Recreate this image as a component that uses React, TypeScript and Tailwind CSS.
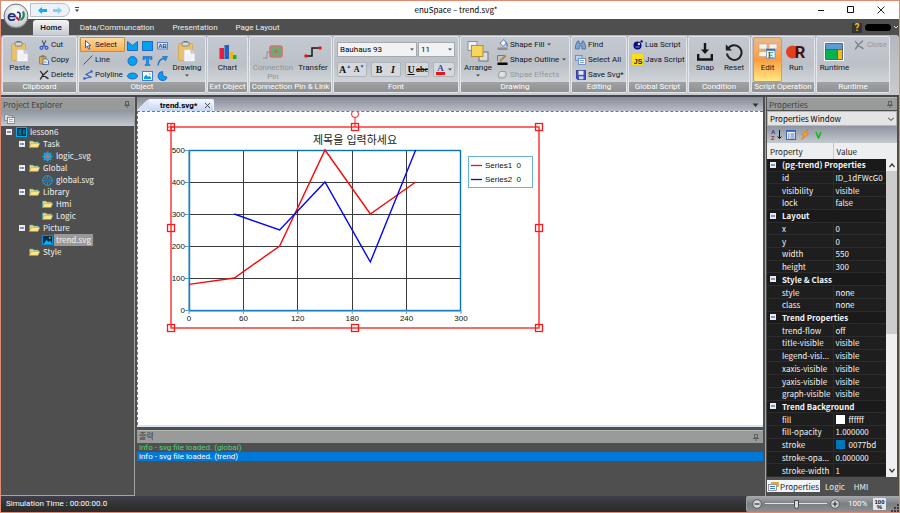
import React from "react";

type SvgProps = { w?: number; h?: number; box: string; children: React.ReactNode };

function Art({ w = 10, h = 10, box, children }: SvgProps) {
  return (
    <svg width={w} height={h} viewBox={box} fill="none" aria-hidden="true" className="shrink-0">
      {children}
    </svg>
  );
}

function Caret() {
  return (
    <Art w={4} h={3} box="0 0 4 3">
      <path d="M0 0.500h4L2 2.500z" fill="#444" />
    </Art>
  );
}

/* ---------- icons ---------- */

function PasteIcon() {
  return (
    <Art w={18} h={21} box="0 0 18 21">
      <rect x="0.500" y="2.500" width="14" height="17" rx="1" fill="#e8c16c" stroke="#d0aa62" />
      <rect x="4" y="1" width="7" height="4" rx="1" fill="#d5d8dc" stroke="#6f747b" strokeWidth="0.800" />
      <path d="M6 1.500a1.500 1.500 0 0 1 3 0" stroke="#555" />
      <path d="M6 8.500h7l4 3.500v8.500H6z" fill="#f6f8fb" stroke="#c1c7cf" strokeWidth="0.800" />
      <path d="M13 8.500v3.500h4" fill="#d8dee6" stroke="#a9b0ba" strokeWidth="0.800" />
      <path d="M8 14h7M8 16h7M8 18h5" stroke="#dfe4ea" strokeWidth="0.700" />
    </Art>
  );
}

function CutIcon() {
  return (
    <Art box="0 0 10 10">
      <path d="M3 0.500L6.500 7M7 0.500L3.500 7" stroke="#4a5a78" strokeWidth="1.200" />
      <circle cx="2.500" cy="7.800" r="1.500" stroke="#2b57c4" strokeWidth="1.200" />
      <circle cx="7.500" cy="7.800" r="1.500" stroke="#2b57c4" strokeWidth="1.200" />
    </Art>
  );
}

function CopyIcon() {
  return (
    <Art box="0 0 10 10">
      <rect x="0.500" y="1.500" width="6.500" height="7.500" rx="0.500" fill="#dcae52" stroke="#9a7433" strokeWidth="0.800" />
      <rect x="2" y="0.300" width="3.500" height="2" fill="#777" />
      <path d="M4 4h3.500L9.500 6v3.600H4z" fill="#fff" stroke="#2d55a8" strokeWidth="0.800" />
      <path d="M5 6.300h2.500M5 7.800h3.500" stroke="#5e86cf" strokeWidth="0.700" />
    </Art>
  );
}

function CrossIcon({ tone = "#2b2b2b" }: { tone?: string }) {
  return (
    <Art box="0 0 10 10">
      <path d="M1.500 1.500C3 4 6 7 9 8.500M8.500 1C6 3 3 6 1.500 9" stroke={tone} strokeWidth="1.400" strokeLinecap="round" />
    </Art>
  );
}

function PointerIcon() {
  return (
    <Art box="0 0 10 10">
      <path d="M2.500 0.500v7.200l1.800-1.600 1.400 3.200 1.300-.6-1.400-3.100h2.300z" fill="#fff" stroke="#2552c0" strokeWidth="0.900" />
    </Art>
  );
}

function LineIcon() {
  return (
    <Art box="0 0 10 10">
      <path d="M0.500 9.500l9-9" stroke="#2353c6" />
    </Art>
  );
}

function PolylineIcon() {
  return (
    <Art box="0 0 10 10">
      <path d="M1 8.500l7-1.500L3 4.500 8.500 1.500" stroke="#2f62cf" strokeWidth="1.200" />
      <circle cx="8.500" cy="1.500" r="1.300" fill="#2f62cf" />
      <circle cx="1.400" cy="8.500" r="1.300" fill="#2f62cf" />
    </Art>
  );
}

const blue = "#00a2f2";
const edge = "#2468c8";

const shapes: { name: string; art: React.ReactNode }[] = [
  { name: "Polygon", art: <path d="M0.500 0.500L5.500 4.500l5-4v9h-10z" fill={blue} stroke={edge} /> },
  { name: "Rectangle", art: <rect x="0.500" y="0.500" width="10" height="9" fill={blue} stroke={edge} /> },
  {
    name: "Text box",
    art: (
      <>
        <rect x="0.500" y="1.500" width="10" height="6.500" fill="#dbe7fa" stroke="#4f78c9" strokeWidth="0.900" />
        <text x="5.500" y="7" textAnchor="middle" fontSize="6" fontWeight="700" fill="#1d3f95" fontFamily="Liberation Sans, sans-serif">AB</text>
      </>
    ),
  },
  { name: "Circle", art: <circle cx="5.500" cy="5" r="4.500" fill={blue} stroke={edge} /> },
  { name: "Text", art: <path d="M1 0.600h9v3H8.500L8 2.200H6.600v6.100l1.400.4v.9H3v-.9l1.400-.4V2.200H3L2.500 3.600H1z" fill={blue} stroke={edge} strokeWidth="0.700" /> },
  {
    name: "Arc",
    art: (
      <>
        <path d="M1 9.500C1.500 5 4 2.800 7 2.500" stroke="#2468c8" strokeWidth="1.300" />
        <path d="M5.500 0.500h5l-2 4.500z" fill={blue} stroke={edge} strokeWidth="0.700" />
      </>
    ),
  },
  { name: "Ellipse", art: <ellipse cx="5.500" cy="5" rx="5" ry="3" fill={blue} stroke={edge} /> },
  {
    name: "Image",
    art: (
      <>
        <rect x="0.500" y="0.500" width="10" height="9" fill="#f4faff" stroke="#3c7fd6" />
        <path d="M2 8V6l2-2.200 2 2 1.300-1 1.700 1.700V8z" fill={blue} />
        <circle cx="7.800" cy="2.900" r="0.900" fill="#f0b32a" />
      </>
    ),
  },
  { name: "Pie", art: <path d="M5.500 0.500A4.500 4.500 0 1 0 10 6.200L6 5z" fill={blue} stroke={edge} /> },
];

function ChartIcon() {
  return (
    <Art w={18} h={14} box="0 0 18 14">
      <rect x="0.500" y="3" width="4.500" height="11" fill="#e81d3f" />
      <rect x="5.500" y="0" width="4.500" height="14" fill="#2163c4" />
      <rect x="10.500" y="7" width="3.500" height="7" fill="#f2b41b" />
      <rect x="14" y="10" width="3.500" height="4" fill="#14b52e" />
    </Art>
  );
}

function PinIcon() {
  return (
    <Art w={20} h={14} box="0 0 20 14">
      <rect x="7" y="1" width="12" height="11" rx="1.500" fill="#6cab72" stroke="#de6e73" strokeWidth="1.600" />
      <path d="M0 13h4V7h8" stroke="#8a8f94" />
      <circle cx="13" cy="6.500" r="1.400" fill="#e2565a" />
    </Art>
  );
}

function TransferIcon() {
  return (
    <Art w={18} h={12} box="0 0 18 12">
      <path d="M2 10h6V2h8" stroke="#161616" strokeWidth="1.500" />
      <circle cx="2" cy="10" r="1.800" fill="#f01414" />
      <circle cx="16" cy="2" r="1.800" fill="#f01414" />
    </Art>
  );
}

function ArrangeIcon() {
  return (
    <Art w={22} h={21} box="0 0 22 21">
      <rect x="1" y="0.500" width="9" height="9" fill="#eef0f3" stroke="#8b8f97" />
      <rect x="12" y="11" width="9" height="9" fill="#d9dde3" stroke="#6e737b" />
      <rect x="4.500" y="4.500" width="11.500" height="11" fill="#f7d65c" stroke="#b8902a" />
    </Art>
  );
}

function FillIcon() {
  return (
    <Art w={11} h={11} box="0 0 11 11">
      <path d="M3 4l4-3.500L9.500 4 6 7.500z" fill="#eef4fa" stroke="#516a93" strokeWidth="0.800" />
      <path d="M8.500 3.500c2 1 2 2.500 1.500 4" stroke="#3a86d8" strokeWidth="1.200" />
      <rect x="0.500" y="8.500" width="10" height="2.500" fill="#8f9091" />
    </Art>
  );
}

function OutlineIcon() {
  return (
    <Art w={11} h={11} box="0 0 11 11">
      <path d="M0.500 7V1.500h7" stroke="#777" />
      <path d="M3 7l6-5.500" stroke="#b6852f" strokeWidth="1.800" />
      <rect x="0.500" y="8.500" width="10" height="2.500" fill="#050505" />
    </Art>
  );
}

function EffectsIcon() {
  return (
    <Art w={11} h={11} box="0 0 11 11">
      <path d="M3 2.500h5.500l1 3.500-2 3H2L1 6z" fill="#cfd2d5" stroke="#9a9da1" />
      <ellipse cx="5" cy="5" rx="2.500" ry="2" fill="#e2e4e6" />
    </Art>
  );
}

function FindIcon() {
  return (
    <Art w={11} h={10} box="0 0 11 10">
      <path d="M2.500 1h1.500v2.500h3V1h1.500l2 4.500V9H6.800V6H4.200v3H0.500V5.500z" fill="#7fa3d2" stroke="#456a9f" strokeWidth="0.800" />
    </Art>
  );
}

function SelectAllIcon() {
  return (
    <Art w={11} h={10} box="0 0 11 10">
      <rect x="0.500" y="0.500" width="6.500" height="5" fill="#bcd2f2" stroke="#5f86c2" strokeWidth="0.800" />
      <rect x="3.500" y="3.500" width="7" height="6" fill="#eef4fc" stroke="#5f86c2" strokeWidth="0.800" />
      <path d="M5 5.500h4M5 7.500h4" stroke="#7fa3d2" />
    </Art>
  );
}

function SaveIcon() {
  return (
    <Art box="0 0 10 10">
      <path d="M0.500 0.500h9v9h-8l-1-1z" fill="#3e51c4" stroke="#25318d" strokeWidth="0.800" />
      <rect x="2.500" y="0.800" width="5" height="4" fill="#e6ebfa" />
      <rect x="3" y="6.300" width="4.500" height="3" fill="#c9d0ee" />
    </Art>
  );
}

function LuaIcon() {
  return (
    <Art box="0 0 10 10">
      <circle cx="4.500" cy="5.500" r="4" fill="#0a0a82" />
      <circle cx="8.600" cy="1.400" r="1.200" fill="#0a0a82" />
      <circle cx="5.900" cy="4" r="1.200" fill="#d8dcec" />
      <path d="M2.500 7h4" stroke="#b9bedd" strokeWidth="0.800" />
    </Art>
  );
}

function JsIcon() {
  return (
    <Art w={11} h={11} box="0 0 11 11">
      <rect width="11" height="11" fill="#f7df1e" />
      <text x="10.300" y="9.800" textAnchor="end" fontSize="7" fontWeight="700" fill="#1b1b1b" fontFamily="Liberation Sans, sans-serif">JS</text>
    </Art>
  );
}

function SnapIcon() {
  return (
    <Art w={16} h={18} box="0 0 16 18">
      <path d="M8 0v8" stroke="#161616" strokeWidth="2.400" />
      <path d="M4 6.500h8L8 11z" fill="#161616" />
      <path d="M1.200 11v5.500h13.600V11" stroke="#161616" strokeWidth="2.400" />
    </Art>
  );
}

function ResetIcon() {
  return (
    <Art w={18} h={18} box="0 0 18 18">
      <path d="M3.200 5.500A7.300 7.300 0 1 1 2 10.500" stroke="#222" strokeWidth="2" />
      <path d="M0.800 1.200v6.300H7z" fill="#222" />
    </Art>
  );
}

function EditIcon() {
  return (
    <Art w={20} h={17} box="0 0 20 17">
      <rect x="1" y="1" width="8" height="5" fill="#f5f2ec" stroke="#b9a98c" strokeWidth="0.600" />
      <rect x="11" y="1" width="8" height="5" fill="#f5f2ec" stroke="#b9a98c" strokeWidth="0.600" />
      <rect x="1" y="8.500" width="8" height="5" fill="#f5f2ec" stroke="#b9a98c" strokeWidth="0.600" />
      <rect x="8.500" y="6" width="8.500" height="9.500" fill="#fbfbfb" stroke="#5d83bd" strokeWidth="0.700" />
      <rect x="8.500" y="6" width="8.500" height="1.800" fill="#2e6dd0" />
      <text x="12.800" y="14.500" textAnchor="middle" fontSize="9" fontWeight="700" fill="#11815a" fontFamily="Liberation Serif, serif">E</text>
    </Art>
  );
}

function RunIcon() {
  return (
    <Art w={22} h={18} box="0 0 22 18">
      <circle cx="7.500" cy="9" r="6.500" fill="#e2401f" />
      <text x="15" y="15" textAnchor="middle" fontSize="17" fontWeight="700" fill="#451318" fontFamily="Roboto, sans-serif">R</text>
    </Art>
  );
}

function RuntimeIcon() {
  return (
    <Art w={20} h={19} box="0 0 20 19">
      <rect width="20" height="19" fill="#fafafa" />
      <rect x="1.500" y="1.500" width="17" height="6" fill="#5b9bd8" />
      <rect x="1.500" y="7.500" width="12" height="10" fill="#08b054" />
      <rect x="13.500" y="7.500" width="5" height="10" fill="#fdb913" />
      <path d="M1.500 1.500h17v16h-17zM1.500 7.500h17M13.500 7.500v10" stroke="#36506d" strokeWidth="0.800" />
    </Art>
  );
}

function ThumbTack({ tone = "#54585c" }: { tone?: string }) {
  return (
    <Art w={6} h={7} box="0 0 6 7">
      <path d="M1.500 0.500h3v3.500h-3zM0 4.500h6M3 4.500V7" stroke={tone} strokeWidth="0.900" />
    </Art>
  );
}

function FolderIcon() {
  return (
    <Art w={11} h={8} box="0 0 11 8">
      <path d="M0.500 7.500V1h3.500l1 1h4.500v2" fill="#f3d878" stroke="#1ea3c9" strokeWidth="0.700" />
      <path d="M2.300 3.300H11L9 7.500H0.500z" fill="#fbe38b" stroke="#b28a2c" strokeWidth="0.500" />
    </Art>
  );
}

function ProjectIcon() {
  return (
    <Art w={11} h={10} box="0 0 11 10">
      <rect x="0.500" y="0.500" width="10" height="9" fill="#063246" stroke="#00aeef" />
      <path d="M2.500 3h3M2.500 5h3M2.500 7h3M8 2.500v5" stroke="#00aeef" />
    </Art>
  );
}

function GearIcon() {
  return (
    <Art w={11} h={11} box="0 0 11 11">
      <path d="M5.500 0.500v10M0.500 5.500h10M2 2l7 7M9 2L2 9" stroke="#12a5ee" strokeWidth="2" />
      <circle cx="5.500" cy="5.500" r="3.600" fill="#12a5ee" />
      <circle cx="5.500" cy="5.500" r="1.900" fill="#f0642c" />
    </Art>
  );
}

function GlobeIcon() {
  return (
    <Art w={11} h={11} box="0 0 11 11">
      <circle cx="5.500" cy="5.500" r="4.800" stroke="#1aa3e8" />
      <path d="M5.500 0.500v10M0.500 5.500h10M2 2l7 7M9 2L2 9" stroke="#1aa3e8" strokeWidth="0.700" />
      <circle cx="5.500" cy="5.500" r="1.600" fill="#0d6fb0" />
    </Art>
  );
}

function PictureIcon() {
  return (
    <Art w={11} h={10} box="0 0 11 10">
      <rect x="0.500" y="0.500" width="10" height="9" fill="#04314a" stroke="#0d8fd0" />
      <path d="M1.500 9l3-4 2 2 1.500-1.500L10 9z" fill="#1aa9f2" />
      <circle cx="7.800" cy="2.800" r="0.900" fill="#ffa52c" />
    </Art>
  );
}

/* ---------- ribbon ---------- */

function Group({ title, className, children }: { title: string; className: string; children: React.ReactNode }) {
  return (
    <section
      aria-label={title}
      className={`flex h-[57px] min-w-0 flex-col overflow-hidden rounded-[2px] border border-[#e3e6ea] bg-linear-to-b from-[#c4c8d0] via-[#bcc1c8] to-[#dde1e3] ${className}`}
    >
      <div className="flex flex-1">{children}</div>
      <h2 className="h-[10px] bg-linear-to-b from-[#a0a2a3] to-[#8f9192] text-center leading-[10px] whitespace-nowrap text-white">
        {title}
      </h2>
    </section>
  );
}

function Big({ icon, label, caret, active, off, className = "" }: { icon: React.ReactNode; label: string; caret?: boolean; active?: boolean; off?: boolean; className?: string }) {
  return (
    <button
      type="button"
      disabled={off}
      className={`flex h-[45px] flex-col items-center border pt-[2px] ${active ? "rounded-[2px] border-[#c2a15c] bg-linear-to-b from-[#e9b98a] via-[#fb9c3c] to-[#ffe983]" : "border-transparent"} ${off ? "text-[#8e9296]" : "text-[#15151f]"} ${className}`}
    >
      <span className="flex h-[23px] items-center justify-center">{icon}</span>
      <span className="text-center leading-[9px]">{label}</span>
      {caret && <span className="mt-[2px]"><Caret /></span>}
    </button>
  );
}

function Small({ icon, label, caret, active, off }: { icon: React.ReactNode; label: string; caret?: boolean; active?: boolean; off?: boolean }) {
  return (
    <button
      type="button"
      disabled={off}
      className={`flex h-[15px] items-center gap-[2px] border px-px whitespace-nowrap ${active ? "rounded-[1px] border-[#b99148] bg-linear-to-b from-[#fbd9a0] to-[#fbb04e]" : "border-transparent"} ${off ? "text-[#93979b]" : "text-[#15151f]"}`}
    >
      <span className="flex w-[11px] justify-center">{icon}</span>
      <span>{label}</span>
      {caret && <span className="pl-px"><Caret /></span>}
    </button>
  );
}

function FontButton({ name, children }: { name: string; children: React.ReactNode }) {
  return (
    <button type="button" aria-label={name} className="flex h-[13px] flex-1 items-center justify-center font-['Liberation_Serif',serif] text-[10px] leading-[12px] text-[#111]">
      {children}
    </button>
  );
}

function Ribbon() {
  return (
    <div className="flex h-[60px] gap-px rounded-t-[3px] bg-[#84868c] bg-linear-to-b from-[#b4b7bd] to-[#c8ccd0] px-px pt-px text-[8px] leading-[12px]">
      <Group title="Clipboard" className="w-[75px]">
        <Big icon={<PasteIcon />} label="Paste" className="w-[33px]" />
        <div className="flex flex-col items-start">
          <Small icon={<CutIcon />} label="Cut" />
          <Small icon={<CopyIcon />} label="Copy" />
          <Small icon={<CrossIcon />} label="Delete" />
        </div>
      </Group>
      <Group title="Object" className="w-[128px]">
        <div className="flex w-[46px] flex-col pl-px">
          <Small icon={<PointerIcon />} label="Select" active />
          <Small icon={<LineIcon />} label="Line" />
          <Small icon={<PolylineIcon />} label="Polyline" />
        </div>
        <div className="grid w-[45px] grid-cols-3 content-start justify-items-center gap-y-[4px] pt-[3px]">
          {shapes.map((s) => (
            <button key={s.name} type="button" aria-label={s.name} className="h-[11px]">
              <Art w={11} h={10} box="0 0 11 10">{s.art}</Art>
            </button>
          ))}
        </div>
        <Big icon={<PasteIcon />} label="Drawing" caret className="w-[34px]" />
      </Group>
      <Group title="Ext Object" className="w-[41px]">
        <Big icon={<ChartIcon />} label="Chart" className="w-full" />
      </Group>
      <Group title="Connection Pin & Link" className="w-[83px]">
        <Big icon={<PinIcon />} label="Connection Pin" off className="w-[46px]" />
        <Big icon={<TransferIcon />} label="Transfer" className="w-[34px]" />
      </Group>
      <Group title="Font" className="w-[126px]">
        <div className="flex flex-1 flex-col gap-[5px] px-[3px] pt-[5px]">
          <div className="flex gap-px">
            <div className="relative flex-1">
              <select aria-label="Font name" className="h-[15px] w-full appearance-none border border-[#a6a9ae] bg-[#f1f2f3] pl-[2px] text-[8px] leading-[13px] text-black">
                <option>Bauhaus 93</option>
              </select>
              <span className="pointer-events-none absolute top-[6px] right-[3px]"><Caret /></span>
            </div>
            <div className="relative w-[37px]">
              <select aria-label="Font size" className="h-[15px] w-full appearance-none border border-[#a6a9ae] bg-[#f1f2f3] pl-[2px] text-[8px] leading-[13px] text-black">
                <option>11</option>
              </select>
              <span className="pointer-events-none absolute top-[6px] right-[3px]"><Caret /></span>
            </div>
          </div>
          <div className="flex gap-[4px]">
            <div className="flex w-[30px] rounded-[2px] border border-[#b0b5bb] bg-[#d5d9dd]">
              <FontButton name="Grow font"><b>A</b><sup className="text-[5px] text-[#2458bb]">▲</sup></FontButton>
              <FontButton name="Shrink font"><b className="text-[8px]">A</b><sup className="text-[5px] text-[#2458bb]">▼</sup></FontButton>
            </div>
            <div className="flex w-[30px] rounded-[2px] border border-[#b0b5bb] bg-[#d5d9dd]">
              <FontButton name="Bold"><b>B</b></FontButton>
              <FontButton name="Italic"><i className="font-bold">I</i></FontButton>
            </div>
            <div className="flex flex-1 rounded-[2px] border border-[#b0b5bb] bg-[#d5d9dd]">
              <FontButton name="Underline"><u className="font-bold">U</u></FontButton>
              <FontButton name="Strikethrough"><s className="text-[8px] font-bold">abc</s></FontButton>
            </div>
            <div className="flex w-[22px] rounded-[2px] border border-[#b0b5bb] bg-[#d5d9dd]">
              <FontButton name="Font colour">
                <span className="h-[11px] border-b-3 border-[#ee1414] px-px text-[9px] leading-[9px] font-bold text-[#2450a8]">A</span>
                <span className="pl-[3px]"><Caret /></span>
              </FontButton>
            </div>
          </div>
        </div>
      </Group>
      <Group title="Drawing" className="w-[110px]">
        <Big icon={<ArrangeIcon />} label="Arrange" caret className="w-[34px]" />
        <div className="flex flex-col items-start">
          <Small icon={<FillIcon />} label="Shape Fill" caret />
          <Small icon={<OutlineIcon />} label="Shape Outline" caret />
          <Small icon={<EffectsIcon />} label="Shpae Effects" off />
        </div>
      </Group>
      <Group title="Editing" className="w-[56px]">
        <div className="flex flex-col items-start pl-px">
          <Small icon={<FindIcon />} label="Find" />
          <Small icon={<SelectAllIcon />} label="Select All" />
          <Small icon={<SaveIcon />} label="Save Svg*" />
        </div>
      </Group>
      <Group title="Global Script" className="w-[59px]">
        <div className="flex flex-col items-start pl-px">
          <Small icon={<LuaIcon />} label="Lua Script" />
          <Small icon={<JsIcon />} label="Java Script" />
        </div>
      </Group>
      <Group title="Condition" className="w-[62px]">
        <Big icon={<SnapIcon />} label="Snap" className="w-[32px]" />
        <Big icon={<ResetIcon />} label="Reset" className="w-[26px]" />
      </Group>
      <Group title="Script Operation" className="w-[64px]">
        <Big icon={<EditIcon />} label="Edit" active className="ml-px w-[29px]" />
        <Big icon={<RunIcon />} label="Run" className="w-[28px]" />
      </Group>
      <Group title="Runtime" className="w-[74px]">
        <Big icon={<RuntimeIcon />} label="Runtime" className="w-[36px]" />
        <div>
          <Small icon={<CrossIcon tone="#7c8084" />} label="Close" off />
        </div>
      </Group>
    </div>
  );
}

/* ---------- title and tabs ---------- */

function Header() {
  return (
    <header className="relative">
      <div className="flex h-[18px] items-center bg-white">
        <div className="ml-[29px] flex h-[14px] w-[40px] items-center justify-center gap-[4px] rounded-r-full border border-[#b7c1cd] bg-[#edf2f8]">
          <button type="button" aria-label="Undo">
            <Art w={10} h={7} box="0 0 10 7"><path d="M0 3.500L4 0v2h5v3H4v2z" fill="#12aaf0" /></Art>
          </button>
          <button type="button" aria-label="Redo">
            <Art w={10} h={7} box="0 0 10 7"><path d="M10 3.500L6 0v2H1v3h5v2z" fill="#7fd0f3" /></Art>
          </button>
        </div>
        <button type="button" aria-label="Customize toolbar" className="ml-[5px]">
          <Art w={4} h={6} box="0 0 4 6"><path d="M0 0.500h4" stroke="#444" /><path d="M0 2.500h4L2 5z" fill="#444" /></Art>
        </button>
        <h1 className="flex-1 pl-[26px] text-center font-['Noto_Sans_CJK_KR',sans-serif] text-[8px] leading-[16px] text-black">enuSpace – trend.svg*</h1>
        <div className="flex w-[92px] items-center gap-[22px] pl-[10px]">
          <button type="button" aria-label="Minimize"><Art w={8} h={8} box="0 0 8 8"><path d="M1 4.500h6" stroke="#111" /></Art></button>
          <button type="button" aria-label="Maximize"><Art w={8} h={8} box="0 0 8 8"><path d="M0.500 0.500h6v6h-6z" stroke="#111" /></Art></button>
          <button type="button" aria-label="Close"><Art w={8} h={8} box="0 0 8 8"><path d="M0.500 0.500l7 7M7.500 0.500l-7 7" stroke="#111" strokeWidth="0.900" /></Art></button>
        </div>
      </div>
      <nav className="flex h-[16px] items-end bg-[#4f4f4f] pl-[32px] text-[8px] leading-[14px] text-[#eeeeee]">
        <button type="button" className="h-[15px] w-[36px] rounded-t-[3px] bg-linear-to-b from-[#f4f5f7] to-[#c6cad1] font-semibold text-[#1a1a2a]">Home</button>
        <button type="button" className="h-[15px] w-[96px]">Data/Communcation</button>
        <button type="button" className="h-[15px] w-[60px]">Presentation</button>
        <button type="button" className="h-[15px] w-[65px]">Page Layout</button>
        <div className="ml-auto flex h-[15px] items-center gap-[3px] pr-px">
          <button type="button" aria-label="Help" className="h-[10px] w-[10px] bg-[#333] text-[10px] leading-[10px] font-bold text-[#ffbe14]">?</button>
          <span className="h-[7px] w-[26px] rounded-full bg-black" />
          <Art w={4} h={3} box="0 0 4 3"><path d="M0 0l2 2 2-2" stroke="#ddd" /></Art>
        </div>
      </nav>
      <button type="button" aria-label="Application menu" className="absolute top-[2px] left-[2px]">
        <Art w={26} h={26} box="0 0 26 26">
          <defs>
            <radialGradient id="orb" cx="0.500" cy="0.300" r="0.800">
              <stop offset="0" stopColor="#ffffff" />
              <stop offset="0.700" stopColor="#cfd3d8" />
              <stop offset="1" stopColor="#92979d" />
            </radialGradient>
          </defs>
          <circle cx="13" cy="13" r="12" fill="url(#orb)" stroke="#6d7176" />
          <path d="M5.500 13.500h6.500c0-4-6.500-3.500-6.500.5 0 3.500 4 4 6.500 2" stroke="#1b2c6d" strokeWidth="1.700" />
          <path d="M14 9.500c3-1 4 2 2.500 6" stroke="#1b2c6d" strokeWidth="1.500" />
          <path d="M13 14l3.500 3.500" stroke="#c22032" strokeWidth="2" />
          <path d="M20 8.500c1.500 3 1 7-2.500 8.500" stroke="#1c8a4c" strokeWidth="2.200" />
        </Art>
      </button>
    </header>
  );
}

/* ---------- project explorer ---------- */

type Row = { level: number; label: string; icon: React.ReactNode; open?: boolean; picked?: boolean };

const rows: Row[] = [
  { level: 0, label: "lesson6", icon: <ProjectIcon />, open: true },
  { level: 1, label: "Task", icon: <FolderIcon />, open: true },
  { level: 2, label: "logic_svg", icon: <GearIcon /> },
  { level: 1, label: "Global", icon: <FolderIcon />, open: true },
  { level: 2, label: "global.svg", icon: <GlobeIcon /> },
  { level: 1, label: "Library", icon: <FolderIcon />, open: true },
  { level: 2, label: "Hmi", icon: <FolderIcon /> },
  { level: 2, label: "Logic", icon: <FolderIcon /> },
  { level: 1, label: "Picture", icon: <FolderIcon />, open: true },
  { level: 2, label: "trend.svg", icon: <PictureIcon />, picked: true },
  { level: 1, label: "Style", icon: <FolderIcon /> },
];

const indents = ["pl-[5px]", "pl-[18px]", "pl-[31px]"];

function Toggle() {
  return (
    <Art w={6} h={6} box="0 0 6 6">
      <rect width="6" height="6" fill="#e9ecf2" />
      <path d="M1 3h4" stroke="#2b3b6b" />
    </Art>
  );
}

function PanelTitle({ children }: { children: React.ReactNode }) {
  return (
    <div className="flex h-[13px] items-center justify-between border-t border-[#b4b6b5] bg-[#989b99] pr-[4px] pl-[2px] text-[#3e4144]">
      <h2>{children}</h2>
      <button type="button" aria-label="Pin panel"><ThumbTack /></button>
    </div>
  );
}

function Explorer() {
  return (
    <aside className="flex w-[134px] shrink-0 flex-col border-r border-b border-[#a4a4a4] bg-[#4f4f4f] font-['Noto_Sans_CJK_KR',sans-serif] text-[8px] leading-[11px]">
      <PanelTitle>Project Explorer</PanelTitle>
      <div className="flex h-[16px] items-center bg-linear-to-b from-[#8f959f] to-[#c3c8cf] pl-[3px]">
        <button type="button" aria-label="Show files">
          <Art w={11} h={11} box="0 0 11 11">
            <path d="M0.500 1.500h3l1 1h4v5h-8z" fill="#d5d8dc" stroke="#6f7a8a" strokeWidth="0.700" />
            <rect x="3.500" y="4.500" width="7" height="6" fill="#f7f7f3" stroke="#5f6a7a" strokeWidth="0.700" />
            <path d="M5 6.500h4M5 8.500h4" stroke="#c8a860" />
          </Art>
        </button>
      </div>
      <ul className="text-[#f4f4f4]">
        {rows.map((r) => (
          <li key={r.label} className={`flex h-[12px] items-center ${indents[r.level]}`}>
            <span className="w-[10px]">{r.open && <Toggle />}</span>
            <span className="flex w-[12px]">{r.icon}</span>
            <button type="button" className={`h-[12px] px-[2px] leading-[12px] ${r.picked ? "bg-[#999999]" : ""}`}>{r.label}</button>
          </li>
        ))}
      </ul>
    </aside>
  );
}

/* ---------- drawing canvas ---------- */

const originX = 51;
const originY = 198;
const px = (v: number) => originX + (v * 272) / 300;
const py = (v: number) => originY - (v * 160) / 500;
const path = (pts: number[][]) => pts.map(([x, y]) => `${px(x)},${py(y)}`).join(" ");

const series1 = [[0, 80], [50, 100], [100, 200], [150, 500], [200, 300], [250, 400]];
const series2 = [[50, 300], [100, 250], [150, 400], [200, 150], [250, 500]];
const handles = [[33, 15], [217, 15], [401, 15], [33, 116], [401, 116], [33, 216], [217, 216], [401, 216]];

function Trend() {
  return (
    <svg width="420" height="230" viewBox="0 0 420 230" fill="none" role="img" aria-label="Trend chart" fontFamily="'Liberation Sans', 'Noto Sans CJK KR', sans-serif" fontSize="8">
      <text x="217" y="32" textAnchor="middle" fontSize="11" fill="#222">제목을 입력하세요</text>
      {[100, 200, 300, 400].map((v) => (
        <line key={v} x1={originX} x2={px(300)} y1={Math.round(py(v)) + 0.5} y2={Math.round(py(v)) + 0.5} stroke="#3c3c3c" />
      ))}
      {[60, 120, 180, 240].map((v) => (
        <line key={v} y1={originY} y2={py(500)} x1={Math.floor(px(v)) + 0.5} x2={Math.floor(px(v)) + 0.5} stroke="#3c3c3c" />
      ))}
      <rect x={originX + 0.5} y={py(500) + 0.5} width="271" height="160" stroke="#0a72bb" strokeWidth="1.400" />
      <path d="M51 38v161h272" stroke="#2f8fd0" />
      {[0, 100, 200, 300, 400, 500].map((v) => (
        <g key={v}>
          <line x1={originX - 4} x2={originX} y1={Math.round(py(v)) + 0.5} y2={Math.round(py(v)) + 0.5} stroke="#4aa0d8" />
          <text x={originX - 4} y={Math.round(py(v)) + 3} textAnchor="end" fill="#111">{v}</text>
        </g>
      ))}
      {[0, 60, 120, 180, 240, 300].map((v) => (
        <g key={v}>
          <line x1={px(v)} x2={px(v)} y1={originY} y2={originY + 4} stroke="#4aa0d8" />
          <text x={px(v)} y={originY + 11} textAnchor="middle" fill="#111">{v}</text>
        </g>
      ))}
      <polyline points={path(series1)} stroke="#f80808" strokeWidth="1.400" />
      <polyline points={path(series2)} stroke="#0404f4" strokeWidth="1.400" />
      <rect x="330.500" y="44.500" width="64" height="31" fill="#fff" stroke="#69b2dd" />
      <path d="M333 53.500h11" stroke="#f00f0f" strokeWidth="1.300" />
      <path d="M333 67.500h11" stroke="#0808ee" strokeWidth="1.300" />
      <text x="347" y="56" fill="#111" xmlSpace="preserve">Series1  0</text>
      <text x="347" y="70" fill="#111" xmlSpace="preserve">Series2  0</text>
      <g stroke="#fb1a1a">
        <rect x="33" y="15" width="368" height="201" strokeWidth="1.300" />
        <path d="M217 15V5" />
        <circle cx="217" cy="2" r="3.500" fill="#fff" />
        {handles.map(([x, y]) => (
          <rect key={`${x}-${y}`} x={x - 3.5} y={y - 3.5} width="7" height="7" strokeWidth="1.300" />
        ))}
        <path d="M30 15h7M33 12v7" />
      </g>
    </svg>
  );
}

function Workspace() {
  return (
    <main className="ml-[2px] flex min-w-0 flex-1 flex-col bg-[#4f4f4f] pr-[2px] text-[8px]">
      <div className="flex h-[14px] items-end bg-linear-to-b from-[#868b95] to-[#b9bec7]">
        <svg width="12" height="12" viewBox="0 0 12 12" aria-hidden="true">
          <path d="M0 12L10 1.500 12 1v11z" fill="#d4e1f6" />
          <path d="M0 12L10 1.500 12 1" fill="none" stroke="#eef4fc" />
        </svg>
        <div className="flex h-[12px] items-center gap-[7px] rounded-tr-[2px] border-t border-r border-[#eef4fc] bg-linear-to-b from-[#f2f7fe] to-[#c3d4f2] pr-[3px] pl-[11px]">
          <button type="button" className="leading-[11px] font-bold text-black">trend.svg*</button>
          <button type="button" aria-label="Close trend.svg"><Art w={5} h={5} box="0 0 5 5"><path d="M0 0l5 5M5 0L0 5" stroke="#333" strokeWidth="0.900" /></Art></button>
        </div>
        <button type="button" aria-label="Open documents" className="mr-[4px] mb-[4px] ml-auto"><Art w={7} h={4} box="0 0 7 4"><path d="M0.500 0.500h6L3.500 4z" fill="#333" /></Art></button>
      </div>
      <div className="flex min-h-0 flex-1 border-b-2 border-[#d9e4f7]">
        <div className="min-w-0 flex-1 overflow-hidden border-t border-l border-dashed border-[#6f7486] bg-white">
          <Trend />
        </div>
      </div>
      <section className="mt-[3px] h-[66px]">
        <PanelTitle>출력</PanelTitle>
        <ul className="leading-[9px]">
          <li className="h-[9px] pl-[2px] text-[#4dd37b]">info - svg file loaded. (global)</li>
          <li className="h-[9px] bg-[#0078d7] pl-[2px] text-white">info - svg file loaded. (trend)</li>
        </ul>
      </section>
    </main>
  );
}

/* ---------- properties ---------- */

type Prop = [string, string?, string?];

const props: Prop[] = [
  ["(pg-trend) Properties"],
  ["id", "ID_1dFWcG0"],
  ["visibility", "visible"],
  ["lock", "false"],
  ["Layout"],
  ["x", "0"],
  ["y", "0"],
  ["width", "550"],
  ["height", "300"],
  ["Style & Class"],
  ["style", "none"],
  ["class", "none"],
  ["Trend Properties"],
  ["trend-flow", "off"],
  ["title-visible", "visible"],
  ["legend-visi...", "visible"],
  ["xaxis-visible", "visible"],
  ["yaxis-visible", "visible"],
  ["graph-visible", "visible"],
  ["Trend Background"],
  ["fill", "ffffff", "bg-white"],
  ["fill-opacity", "1.000000"],
  ["stroke", "0077bd", "bg-[#0077bd]"],
  ["stroke-opa...", "0.000000"],
  ["stroke-width", "1"],
];

function Properties() {
  return (
    <aside className="flex w-[134px] shrink-0 flex-col border-l border-[#a4a4a4] bg-[#4f4f4f] pr-[2px] pl-px font-['Noto_Sans_CJK_KR',sans-serif] text-[8px] leading-[11px]">
      <PanelTitle>Properties</PanelTitle>
      <div className="relative mt-px">
        <select aria-label="Property source" className="h-[15px] w-full appearance-none border border-[#b8b8b8] bg-[#e4e4e4] pl-[2px] text-[8px] leading-[13px] text-black">
          <option>Properties Window</option>
        </select>
        <span className="pointer-events-none absolute top-[6px] right-[3px]"><Art w={6} h={4} box="0 0 6 4"><path d="M0 0.500l3 3 3-3" stroke="#333" /></Art></span>
      </div>
      <div className="flex h-[17px] items-center gap-[4px] bg-linear-to-b from-[#8f959f] to-[#c3c8cf] pl-[4px]">
        <button type="button" aria-label="Sort">
          <Art w={11} h={11} box="0 0 11 11">
            <text x="0" y="5" fontSize="6" fontWeight="700" fill="#27408b" fontFamily="Liberation Sans, sans-serif">A</text>
            <text x="0" y="11" fontSize="6" fontWeight="700" fill="#a12d2d" fontFamily="Liberation Sans, sans-serif">Z</text>
            <path d="M8.500 1v8M6.500 7.500l2 2 2-2" stroke="#111" />
          </Art>
        </button>
        <button type="button" aria-label="Categories">
          <Art w={10} h={10} box="0 0 10 10">
            <rect x="0.500" y="0.500" width="9" height="9" fill="#f2f6fd" stroke="#3565bb" />
            <path d="M0.500 1.500h9M2 4h1.500M2 6h1.500M2 8h1.500M4.500 4h4M4.500 6h4M4.500 8h4" stroke="#3565bb" strokeWidth="0.900" />
          </Art>
        </button>
        <button type="button" aria-label="Events">
          <Art w={10} h={11} box="0 0 10 11"><path d="M8 0.500L1.500 5.500l3 .5L1.500 10.500 8.500 5l-3-.5z" fill="#ffb01f" stroke="#d46a10" strokeWidth="0.600" /></Art>
        </button>
        <button type="button" aria-label="Validate">
          <Art w={10} h={8} box="0 0 10 8"><path d="M2 1l2.500 6L7 1" stroke="#0fbd1d" strokeWidth="1.600" /></Art>
        </button>
      </div>
      <div className="flex bg-[#1e1e1e]">
        <table className="h-[334px] flex-1 table-fixed border-collapse text-[#f4f4f4]">
          <colgroup>
            <col className="w-[66px]" />
            <col />
          </colgroup>
          <thead>
            <tr className="h-[16px] bg-[#eceef0] text-left text-[#1b1b1b]">
              <th scope="col" className="border-r border-[#c8c8c8] pl-[3px] font-normal">Property</th>
              <th scope="col" className="pl-[3px] font-normal">Value</th>
            </tr>
          </thead>
          <tbody>
            {props.map(([name, value, swatch]) =>
              value === undefined ? (
                <tr key={name} className="bg-[#1a1a1a]">
                  <th colSpan={2} scope="colgroup" className="p-0 text-left leading-[11px] font-bold whitespace-nowrap">
                    <div className="flex items-center gap-[6px] pl-[3px]"><Toggle />{name}</div>
                  </th>
                </tr>
              ) : (
                <tr key={name}>
                  <th scope="row" className="border-y border-r border-[#2c2c2c] p-0 pl-[15px] text-left leading-[11px] font-normal whitespace-nowrap">{name}</th>
                  <td className="border-y border-[#2c2c2c] p-0 pl-[2px] leading-[11px] whitespace-nowrap">
                    <div className="flex items-center gap-[4px]">
                      {swatch && <span className={`h-[9px] w-[9px] ${swatch}`} />}
                      {value}
                    </div>
                  </td>
                </tr>
              ),
            )}
          </tbody>
        </table>
        <div className="flex w-[11px] flex-col items-center bg-[#f0f0f0]">
          <div className="h-[16px] w-full bg-[#eceef0]" />
          <Art w={6} h={12} box="0 0 6 12"><path d="M0.500 8L3 5l2.500 3" stroke="#333" strokeWidth="1.200" /></Art>
          <div className="h-[163px] w-full bg-[#cdcdcd]" />
          <div className="mt-auto"><Art w={6} h={12} box="0 0 6 12"><path d="M0.500 4L3 7l2.500-3" stroke="#333" strokeWidth="1.200" /></Art></div>
        </div>
      </div>
      <div className="mt-[3px] flex h-[13px] items-start text-[#eeeeee]">
        <button type="button" className="flex h-[12px] w-[53px] items-center justify-center gap-px bg-[#f2f5f9] text-[#1b1b1b]">
          <Art w={11} h={9} box="0 0 11 9">
            <rect x="0.500" y="2.500" width="8" height="6" fill="#f7f7f3" stroke="#6a7484" strokeWidth="0.700" />
            <path d="M2 4.500h5M2 6.500h5" stroke="#4a78c8" />
            <path d="M3 1h7v4" stroke="#e0a92e" strokeWidth="1.800" />
          </Art>
          Properties
        </button>
        <button type="button" className="h-[12px] w-[30px]">Logic</button>
        <button type="button" className="h-[12px] w-[22px]">HMI</button>
      </div>
    </aside>
  );
}

/* ---------- status bar ---------- */

function RoundButton({ name, plus }: { name: string; plus?: boolean }) {
  return (
    <button type="button" aria-label={name}>
      <Art w={10} h={10} box="0 0 10 10">
        <circle cx="5" cy="5" r="4.300" fill="#d5d7da" stroke="#55585c" />
        <path d={plus ? "M2.500 5h5M5 2.500v5" : "M2.500 5h5"} stroke="#2c2e31" strokeWidth="1.200" />
      </Art>
    </button>
  );
}

function StatusBar() {
  return (
    <footer className="flex h-[16px] items-center justify-between bg-linear-to-b from-[#3f404d] via-[#333333] to-[#2b2b2b] pl-[5px] text-[8px] leading-[12px] text-white">
      <span>Simulation Time : 00:00:00.0</span>
      <div className="flex h-full w-[153px] items-center gap-[3px] rounded-l-[2px] border-l border-[#9c9fa3] bg-linear-to-b from-[#a6a9ad] via-[#7a7d81] to-[#8d9094] pl-[5px]">
        <RoundButton name="Zoom out" />
        <input
          type="range"
          aria-label="Zoom"
          min={0}
          max={200}
          defaultValue={100}
          className="h-[10px] w-[62px] appearance-none bg-linear-to-b from-transparent from-45% via-[#e0e0e0] via-45% to-transparent to-55% [&::-webkit-slider-thumb]:h-[9px] [&::-webkit-slider-thumb]:w-[5px] [&::-webkit-slider-thumb]:appearance-none [&::-webkit-slider-thumb]:rounded-b-[3px] [&::-webkit-slider-thumb]:border [&::-webkit-slider-thumb]:border-[#44474b] [&::-webkit-slider-thumb]:bg-[#d7d9dc]"
        />
        <RoundButton name="Zoom in" plus />
        <output className="pl-[5px]">100%</output>
        <button type="button" aria-label="Reset zoom" className="ml-[3px]">
          <Art w={13} h={12} box="0 0 13 12">
            <rect width="13" height="12" rx="1" fill="#e6e7e9" />
            <text x="6.500" y="5.500" textAnchor="middle" fontSize="6" fontWeight="700" fill="#111" fontFamily="Liberation Sans, sans-serif">100</text>
            <text x="6.500" y="11" textAnchor="middle" fontSize="6" fontWeight="700" fill="#111" fontFamily="Liberation Sans, sans-serif">%</text>
          </Art>
        </button>
        <span className="ml-auto self-end">
          <Art w={8} h={8} box="0 0 8 8"><path d="M6 0h2v2H6zM3 3h2v2H3zM6 3h2v2H6zM0 6h2v2H0zM3 6h2v2H3zM6 6h2v2H6z" fill="#3a3c3f" /></Art>
        </span>
      </div>
    </footer>
  );
}

export default function App() {
  return (
    <div className="flex h-screen flex-col overflow-hidden border border-[#e08a70] bg-[#4f4f4f] font-[Roboto,'Noto_Sans_CJK_KR',sans-serif]">
      <Header />
      <Ribbon />
      <div className="h-[2px] shrink-0 bg-[#45454b]" />
      <div className="flex min-h-0 flex-1">
        <Explorer />
        <Workspace />
        <Properties />
      </div>
      <StatusBar />
    </div>
  );
}
